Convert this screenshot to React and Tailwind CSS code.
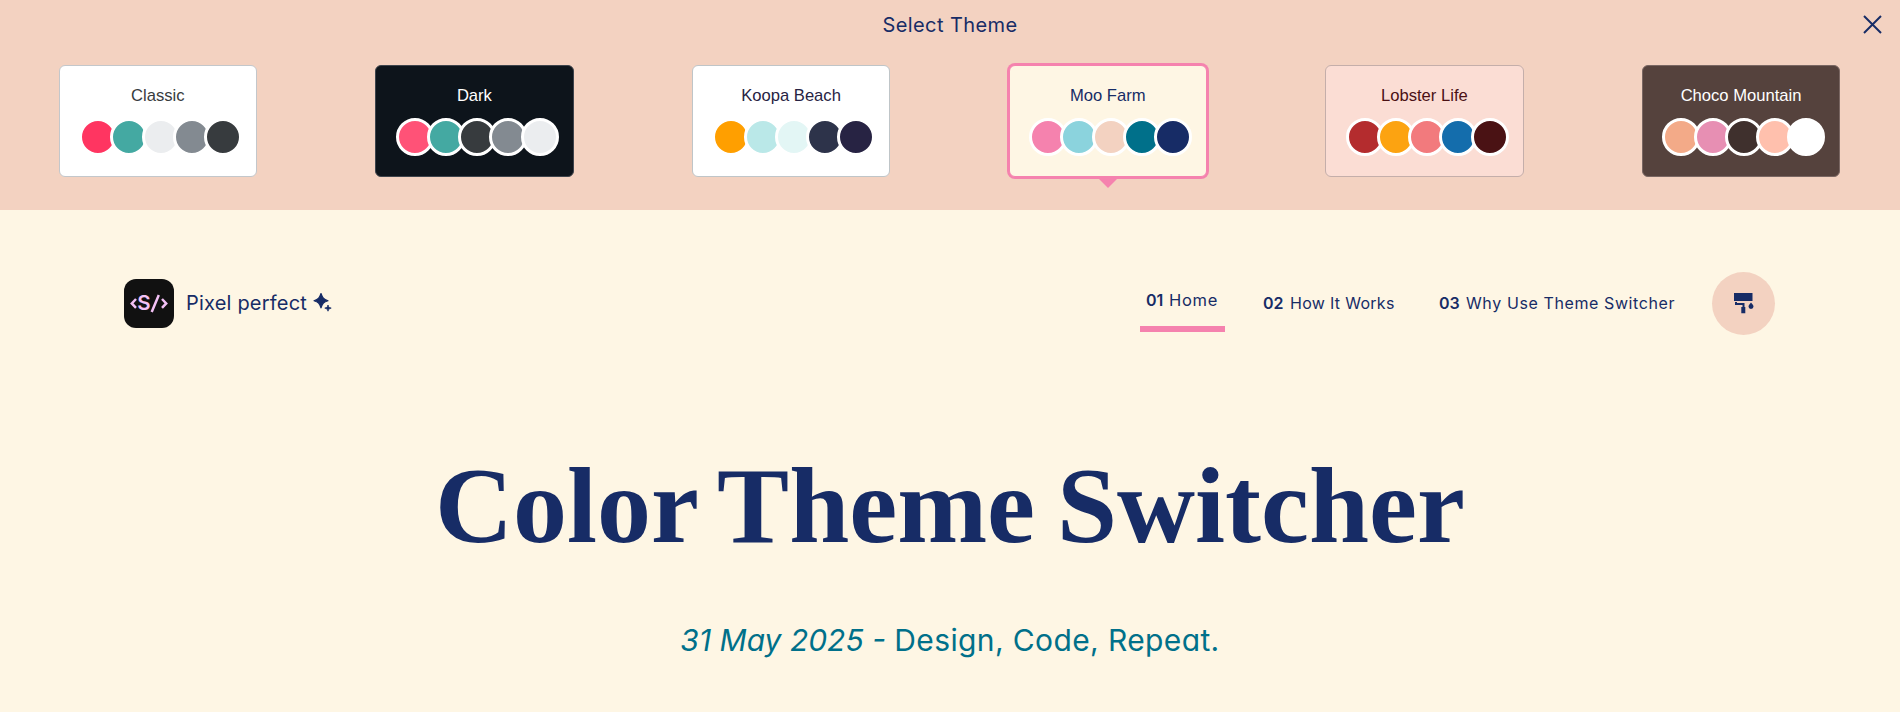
import React from "react";

const themes = [
  { name: "Classic", card: "bg-white text-[#373b3e] border-[#c3c7cb]", dots: ["bg-[#ff3561]", "bg-[#44a9a2]", "bg-[#ebedef]", "bg-[#838a91]", "bg-[#373b3e]"] },
  { name: "Dark", card: "bg-[#0d141b] text-white border-[#3e444c]", dots: ["bg-[#ff5277]", "bg-[#44a9a2]", "bg-[#373b3e]", "bg-[#838a91]", "bg-[#ebedef]"] },
  { name: "Koopa Beach", card: "bg-white text-[#272343] border-[#bfc5c8]", dots: ["bg-[#ff9f00]", "bg-[#bae8e8]", "bg-[#e3f6f5]", "bg-[#2d334a]", "bg-[#272343]"] },
  { name: "Moo Farm", selected: true, card: "bg-[#fef6e4] text-[#172c66] border-[#f582ae] ring-2 ring-[#f582ae]", dots: ["bg-[#f582ae]", "bg-[#8bd3dd]", "bg-[#f3d2c1]", "bg-[#00708a]", "bg-[#172c66]"] },
  { name: "Lobster Life", card: "bg-[#fbddd4] text-[#4a1014] border-[#c4aeaa]", dots: ["bg-[#b42c2e]", "bg-[#fca311]", "bg-[#f27a7d]", "bg-[#146dac]", "bg-[#4a1214]"] },
  { name: "Choco Mountain", card: "bg-[#55423d] text-white border-[#7a6763]", dots: ["bg-[#f3aa88]", "bg-[#e78fb3]", "bg-[#3f302d]", "bg-[#ffc0ad]", "bg-white"] },
];

function ThemeCard({ theme }) {
  return (
    <div className="flex justify-center">
      <button className={"relative flex h-[112px] w-[198.4px] flex-col rounded-[6px] border " + theme.card}>
        <span className="mt-[20px] block w-full text-center font-['Liberation_Sans',sans-serif] text-[16.6px] leading-[20px]">
          {theme.name}
        </span>
        <span className="ml-[19.5px] mt-3 flex">
          {theme.dots.map((dot, i) => (
            <i key={i} className={"-mr-[6.75px] block size-[38px] shrink-0 rounded-full border-[3px] border-white " + dot} />
          ))}
        </span>
        {theme.selected && (
          <svg className="absolute left-[88px] top-[112px]" width="20" height="11" viewBox="0 0 20 11">
            <path d="M0 0h20L10 10z" fill="#f582ae" />
          </svg>
        )}
      </button>
    </div>
  );
}

function NavItem({ num, label, className, numClass, labelClass }) {
  return (
    <a className={"flex items-baseline whitespace-nowrap text-[16px] leading-[24px] " + className}>
      <b className={"font-semibold " + numClass}>{num}</b>
      <span className={labelClass}>{label}</span>
    </a>
  );
}

export default function App() {
  return (
    <div className="h-[712px] overflow-hidden bg-white">
      <div className="h-full w-[1900px] bg-[#fef6e4] font-['Inter','Open_Sans',sans-serif] text-[#172c66] [font-feature-settings:'cv11']">
        <section className="h-[210px] bg-[#f3d2c1]">
          <header className="relative flex h-[65px] justify-center pt-[10px]">
            <h2 className="text-[20px] leading-[30px] tracking-[.4px]">Select Theme</h2>
            <button className="absolute left-[1863px] top-[15px]">
              <svg width="19" height="19" viewBox="0 0 19 19" fill="none" stroke="#172c66" strokeWidth="2">
                <path d="M1 1l17 17M18 1L1 18" />
              </svg>
            </button>
          </header>
          <div className="-ml-[.6px] grid w-[1900px] grid-cols-6">
            {themes.map((t) => <ThemeCard key={t.name} theme={t} />)}
          </div>
        </section>

        <header className="flex h-[186px] items-center pl-[124px]">
          <div className="flex h-[49px] w-[50px] items-center justify-center rounded-[12px] bg-[#111]">
            <svg width="40" height="24" viewBox="0 0 40 24" fill="none" stroke="#f2c0f5" strokeWidth="2.5">
              <path d="M7 8L2.800 12.400l4.200 4.400M33 8l4.200 4.400-4.200 4.400M29.800 4L22.700 21" />
              <text x="8.3" y="19.300" fill="#f2c0f5" stroke="none" fontSize="20.5" fontWeight="600" fontFamily="Inter">S</text>
            </svg>
          </div>
          <span className="ml-3 w-[121px] whitespace-nowrap text-[20px] leading-[30px] tracking-[.2px]">Pixel perfect</span>
          <svg className="-mt-[1px] ml-[6px]" width="19" height="19" viewBox="0 0 19 19" fill="#172c66">
            <path d="M8 .5C9.500 5 10.500 6.200 15 7.700C10.500 9.200 9.500 10.400 8 14.900C6.500 10.400 5.500 9.200 1 7.700C5.500 6.200 6.500 5 8 .5z" stroke="#172c66" strokeWidth="1.2" strokeLinejoin="round" />
            <path d="M15 12c.6 2.200 1 2.500 3.200 3.100-2.200.6-2.600 1-3.200 3.100-.6-2.100-1-2.500-3.200-3.100 2.200-.6 2.600-.9 3.200-3.100z" stroke="#172c66" strokeWidth=".8" />
          </svg>
          <nav className="ml-[808px] flex items-center">
            <NavItem num="01" label="Home" className="mt-[3px] h-[54px] w-[85px] border-b-[6px] border-[#f582ae] pl-[6px] pt-[10px]" numClass="w-[23px]" labelClass="text-[16.5px] tracking-[.7px]" />
            <NavItem num="02" label="How It Works" className="ml-[38px] w-[176px]" numClass="w-[27px]" labelClass="tracking-[.3px]" />
            <NavItem num="03" label="Why Use Theme Switcher" className="w-[273px]" numClass="w-[27px]" labelClass="tracking-[.6px]" />
          </nav>
          <button className="flex size-[63px] items-center justify-center rounded-full bg-[#f3d2c1]">
            <svg width="21" height="21" viewBox="0 0 21 21" fill="#172c66">
              <path d="M1 0h18.500v8H1z" />
              <path d="M3 9v2h7.500v4" fill="none" stroke="#172c66" strokeWidth="2" />
              <path d="M8.300 14h4v6.300h-4zM18 9.500c1 1.500 2.500 2.500 2.500 4a2.500 2.500 0 0 1-5 0c0-1.500 1.500-2.500 2.500-4z" />
            </svg>
          </button>
        </header>

        <main className="flex flex-col items-center">
          <h1 className="mt-[45px] whitespace-nowrap font-['Liberation_Serif',serif] text-[108px] font-bold leading-[130px] [word-spacing:-5px]">Color Theme Switcher</h1>
          <p className="mt-[47px] whitespace-nowrap text-[30px] leading-[45px] text-[#00708a]">
            <i>31 May 2025 - </i><span className="tracking-[.38px]">Design, Code, Repeat.</span>
          </p>
        </main>
      </div>
    </div>
  );
}
